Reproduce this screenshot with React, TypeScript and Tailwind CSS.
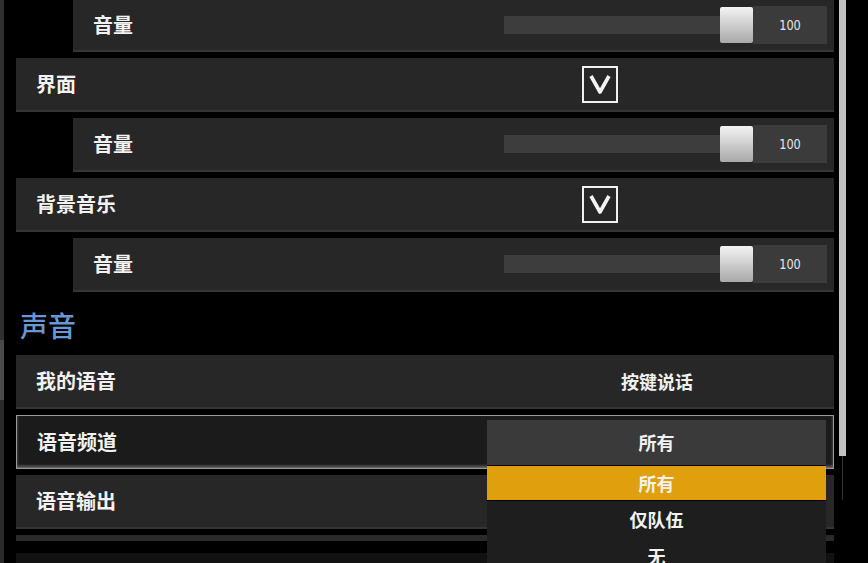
import React from "react";

const CJK = { fontFamily: '"Noto Sans CJK SC", "Noto Sans", sans-serif' };

const Row = ({
  label,
  sub = false,
  selected = false,
  first = false,
  children,
}: {
  label: string;
  sub?: boolean;
  selected?: boolean;
  first?: boolean;
  children?: React.ReactNode;
}) => (
  <div
    className={`flex items-center shrink-0 ${first ? "h-[52px]" : "h-[54px]"} ${
      sub ? "ml-[57px]" : ""
    } ${
      selected
        ? "bg-[#1b1b1b] border border-[#9a9a9a] shadow-[inset_0_-2px_3px_rgba(255,255,255,0.35)]"
        : "bg-[#272727] border-b-2 border-[#353535]"
    }`}
  >
    <span className="pl-[20px] flex-1 text-[20px] font-bold text-[#f2f2f2] leading-none">
      {label}
    </span>
    <div className="w-[340px] mr-[7px] h-full flex items-center">{children}</div>
  </div>
);

const Volume = () => (
  <div className="flex items-center w-full pl-[17px]">
    <div className="flex-1 h-[18px] bg-[#3d3d3d]" />
    <div className="w-[33px] h-[36px] rounded-[2px] bg-gradient-to-b from-[#f4f4f4] to-[#a9a9a9]" />
    <div
      className="w-[74px] h-[38px] bg-[#3b3b3b] flex items-center justify-center text-[14px] text-[#e6e6e6] pt-[1px]"
      style={{ fontFamily: '"DejaVu Sans Condensed", "Liberation Sans", sans-serif' }}
    >
      <span className="scale-x-90 inline-block">100</span>
    </div>
  </div>
);

const Check = () => (
  <div className="pl-[95px] flex items-center h-full">
    <div className="w-[36px] h-[37px] border-2 border-[#f0f0f0] flex items-center justify-center">
      <svg width="24" height="22" viewBox="0 0 24 22">
        <path d="M3 3 L12 19 L21 3" fill="none" stroke="#f4f4f4" strokeWidth="3.6" strokeLinejoin="round" />
      </svg>
    </div>
  </div>
);

export default function App() {
  return (
    <div className="w-[868px] h-[563px] bg-black relative overflow-hidden flex" style={CJK}>
      {/* left edge strip */}
      <div className="w-[4px] h-full flex flex-col">
        <div className="h-[340px] bg-[#303030]" />
        <div className="h-[60px] bg-[#4a4a4a]" />
        <div className="flex-1 bg-[#2b2b2b]" />
      </div>

      <div className="w-[818px] ml-[12px] flex flex-col gap-[6px]">
        <Row label="音量" sub first>
          <Volume />
        </Row>
        <Row label="界面">
          <Check />
        </Row>
        <Row label="音量" sub>
          <Volume />
        </Row>
        <Row label="背景音乐">
          <Check />
        </Row>
        <Row label="音量" sub>
          <Volume />
        </Row>
        <div className="h-[51px] shrink-0 flex items-center pl-[4px] text-[28px] text-[#6a98d4] font-medium leading-none pt-[2px]">
          声音
        </div>
        <Row label="我的语音">
          <div className="w-full text-center text-[18px] font-bold text-[#f0f0f0]">按键说话</div>
        </Row>
        <Row label="语音频道" selected />
        <Row label="语音输出" />
        <div className="h-[6px] bg-[#2a2a2a] shrink-0" />
        <div className="flex-1 bg-[#111] mt-[6px]" />
      </div>

      {/* scrollbar */}
      <div className="ml-[5px] w-[7px] flex flex-col items-center">
        <div className="w-[7px] h-[456px] bg-[#c2c2c2]" />
        <div className="w-[1px] h-[44px] bg-[#333]" />
      </div>

      {/* open dropdown */}
      <div className="absolute left-[487px] top-[420px] w-[339px] flex flex-col text-[18px] font-bold text-[#f2f2f2]">
        <div className="h-[45px] bg-[#3a3a3a] flex items-center justify-center">所有</div>
        <div className="h-[36px] bg-[#e0a00e] flex items-center justify-center border-y border-black">所有</div>
        <div className="h-[37px] bg-[#1e1e1e] flex items-center justify-center">仅队伍</div>
        <div className="h-[37px] bg-[#1e1e1e] flex items-center justify-center">无</div>
      </div>
    </div>
  );
}
